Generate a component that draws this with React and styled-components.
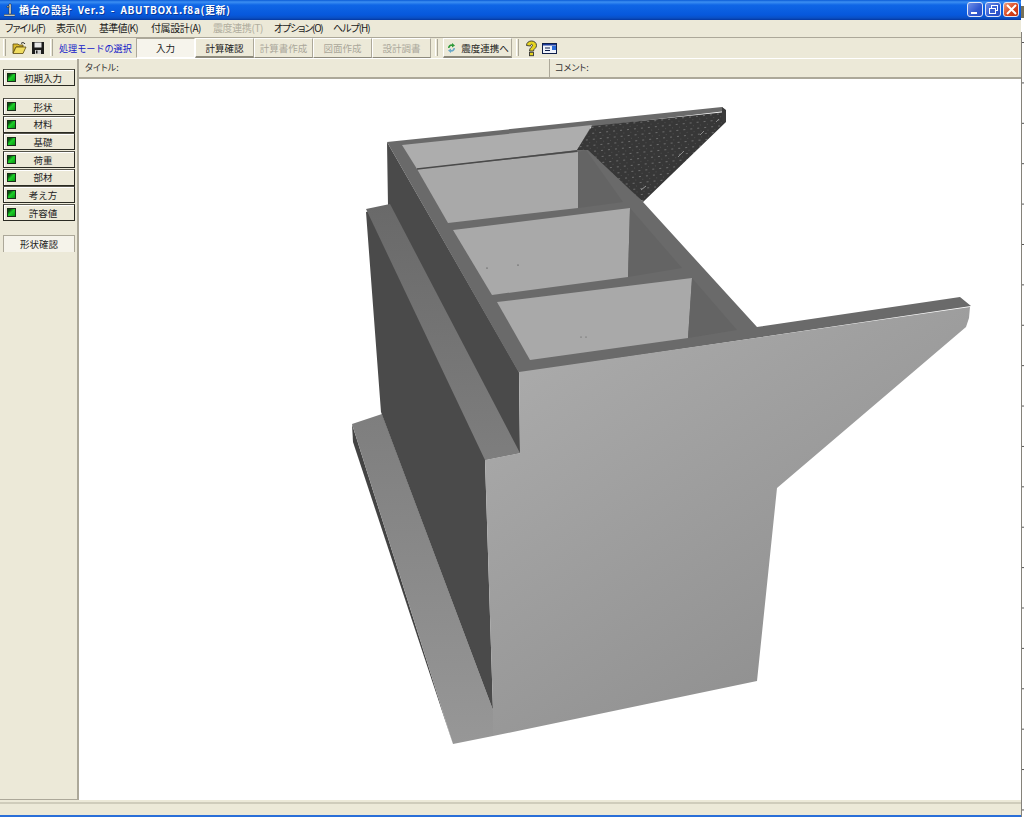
import React from "react";
import styled, { createGlobalStyle } from "styled-components";

const Global = createGlobalStyle`
  html, body { margin: 0; padding: 0; background: #fff; }
  body { width: 1024px; height: 817px; overflow: hidden; font-family: "Noto Sans CJK JP", "Liberation Sans", sans-serif; }
`;

const Screen = styled.div`
  display: flex;
  width: 1024px;
  height: 817px;
`;
const Window = styled.div`
  display: flex;
  flex-direction: column;
  width: 1021px;
  height: 817px;
  background: #ece9d8;
  flex: none;
`;
const BehindColumn = styled.div`
  flex: 1;
  display: flex;
  flex-direction: column;
`;
const BehindTitle = styled.div`
  height: 12px;
  margin-top: 6px;
  background: #77715a;
`;
const BehindPage = styled.div`
  flex: 1;
  margin-top: 14px;
  border-left: 1px solid #85827a;
  background: linear-gradient(to bottom, #fff 0 38px, #555 38px 39px, #fff 39px 40.4px) 0 12px / 100% 40.4px;
`;
const TitleBar = styled.div`
  height: 20px;
  flex: none;
  box-sizing: border-box;
  display: flex;
  align-items: center;
  padding: 0 2px 1px 4px;
  background: linear-gradient(to bottom, #0a5bd6 0, #3c8ff2 2px, #0f66e6 5px, #0758dc 15px, #0a4fc4 18px, #0537a0 20px);
`;
const TitleText = styled.span`
  flex: 1;
  margin-left: 4px;
  color: #fff;
  font: bold 10px "Noto Sans CJK JP", sans-serif;
  letter-spacing: 0.65px;
  word-spacing: 2.5px;
  white-space: nowrap;
  text-shadow: 1px 1px 0 #0a3a9c;
`;
const WinButton = styled.div`
  width: 16px;
  height: 15px;
  margin-left: 2px;
  border: 1px solid #dfe6f7;
  border-radius: 3px;
  box-sizing: border-box;
  display: flex;
  align-items: center;
  justify-content: center;
  background: ${(p) => (p.$close ? "linear-gradient(135deg,#f0a080,#d8431c 55%,#c03010)" : "linear-gradient(135deg,#6f90e8,#2f58d0 60%,#2a4cc0)")};
`;
const MenuBar = styled.div`
  height: 18px;
  flex: none;
  box-sizing: border-box;
  display: flex;
  align-items: center;
  padding: 0 0 1px 5px;
  border-bottom: 1px solid #aca899;
`;
const MenuItem = styled.span`
  width: ${(p) => p.$w}px;
  flex: none;
  font-size: 10px;
  line-height: 16px;
  white-space: nowrap;
  letter-spacing: ${(p) => p.$ls}px;
  font-feature-settings: "palt";
  color: ${(p) => (p.$off ? "#b0ad9e" : "#1a1a1a")};
`;
const Toolbar = styled.div`
  height: 21px;
  flex: none;
  box-sizing: border-box;
  display: flex;
  align-items: stretch;
  padding-left: 3px;
  border-bottom: 1px solid #fff;
`;
const Grip = styled.div`
  width: 3px;
  box-sizing: border-box;
  margin: 1px 0 2px ${(p) => p.$left || 0}px;
  border-left: 1px solid #fff;
  border-right: 1px solid #aca899;
`;
const IconSlot = styled.div`
  width: ${(p) => p.$w}px;
  margin-left: ${(p) => p.$ml || 0}px;
  display: flex;
  align-items: center;
  justify-content: center;
`;
const ModeLabel = styled.span`
  width: 77px;
  margin-left: 6px;
  color: #1420c8;
  font-size: 9.1px;
  line-height: 20px;
  white-space: nowrap;
`;
const ToolButton = styled.div`
  width: ${(p) => p.$w || 59}px;
  margin-left: ${(p) => p.$ml || 0}px;
  box-sizing: border-box;
  display: flex;
  align-items: center;
  justify-content: center;
  gap: 4px;
  font-size: 9.5px;
  white-space: nowrap;
  color: ${(p) => (p.$off ? "#aaa79a" : "#1a1a1a")};
  background: ${(p) => (p.$pressed ? "#f6f4ec" : "#ece9d8")};
  border-style: solid;
  border-width: 1px;
  border-color: ${(p) => (p.$pressed ? "#aca899 #fff #fff #aca899" : "#fff #aca899 #8d8a7c #fff")};
  border-bottom-width: ${(p) => (p.$pressed || p.$off ? 1 : 2)}px;
`;
const Main = styled.div`
  flex: 1;
  min-height: 0;
  display: flex;
`;
const Sidebar = styled.div`
  width: 79px;
  flex: none;
  box-sizing: border-box;
  display: flex;
  flex-direction: column;
  padding: 10px 2px 0 3px;
  border-bottom: 1px solid #aca899;
  border-right: 2px solid #aca899;
  box-shadow: inset 0 2px 0 -1px #fff;
`;
const NavButton = styled.div`
  height: 17px;
  flex: none;
  margin-bottom: ${(p) => p.$mb ?? 0.7}px;
  box-sizing: border-box;
  display: flex;
  align-items: center;
  padding-left: 3px;
  border: 1px solid #2a2a22;
  border-top-color: #55544a;
  background: #ece9d8;
  box-shadow: inset 1px 1px 0 #fff;
`;
const Led = styled.span`
  width: 9px;
  height: 9px;
  flex: none;
  background: linear-gradient(135deg, #0b5410 20%, #1bd027 48%, #0a9412);
  border: 1px solid #1c2c1c;
  box-sizing: border-box;
`;
const NavText = styled.span`
  flex: 1;
  text-align: center;
  padding-right: 4px;
  font-size: 9.5px;
  color: #222;
  white-space: nowrap;
`;
const ViewTab = styled.div`
  height: 17px;
  margin-top: 13px;
  box-sizing: border-box;
  display: flex;
  align-items: center;
  justify-content: center;
  font-size: 9.5px;
  color: #222;
  border: 1px solid #aca899;
  border-bottom: none;
  background: #f5f3ea;
`;
const Content = styled.div`
  flex: 1;
  min-width: 0;
  display: flex;
  flex-direction: column;
`;
const InfoRow = styled.div`
  height: 20px;
  flex: none;
  display: flex;
  box-sizing: border-box;
  border-bottom: 2px solid #aca899;
`;
const InfoCell = styled.div`
  width: ${(p) => p.$w}px;
  flex: ${(p) => (p.$w ? "none" : 1)};
  box-sizing: border-box;
  padding-left: ${(p) => p.$pl}px;
  font-size: 9px;
  line-height: 17px;
  color: #333;
  font-feature-settings: "palt";
  border-right: ${(p) => (p.$w ? "1px solid #aca899" : "none")};
`;
const Viewport = styled.div`
  flex: 1;
  min-height: 0;
  background: #fff;
`;
const Drawing = styled.svg`
  display: block;
  width: 100%;
  height: 100%;
`;
const StatusBar = styled.div`
  height: 13px;
  flex: none;
  margin-top: 2px;
  border-top: 2px solid #cfccbb;
  box-sizing: border-box;
`;
const BottomEdge = styled.div`
  height: 2px;
  flex: none;
  background: #2a6fd8;
`;

const Poly = ({ p, f }) => <polygon points={p} fill={f} />;

const Bridge = () => (
  <Drawing viewBox="79 79 942 721" preserveAspectRatio="none">
    <defs>
      <linearGradient id="front" x1="0" y1="0" x2="0.75" y2="1">
        <stop offset="0" stopColor="#aeaeae" />
        <stop offset="1" stopColor="#8c8c8c" />
      </linearGradient>
      <linearGradient id="corbel" x1="0" y1="0" x2="0" y2="1">
        <stop offset="0" stopColor="#696969" />
        <stop offset="1" stopColor="#7e7e7e" />
      </linearGradient>
      <linearGradient id="base" x1="0" y1="0" x2="0" y2="1">
        <stop offset="0" stopColor="#7e7e7e" />
        <stop offset="1" stopColor="#979797" />
      </linearGradient>
      <pattern id="mesh" width="7" height="6" patternUnits="userSpaceOnUse" patternTransform="rotate(-6)">
        <rect width="7" height="6" fill="#373737" />
        <rect x="1" y="2" width="2" height="1" fill="#6c6c6c" />
        <rect x="4" y="5" width="1" height="1" fill="#505050" />
      </pattern>
    </defs>
    <Poly p="352,424 353,442 450,735 453,744" f="#434343" />
    <Poly p="352,424 382,414 493,710 493,736 453,744" f="url(#base)" />
    <Poly p="387,142 388,206 366,212 381,412 493,710 485,460 520,453 519,372" f="#4a4a4a" />
    <Poly p="366,209 390,204 520,453 485,460" f="url(#corbel)" />
    <Poly p="387,142 722,107 726,111 590,127 592,150 643,202 757,327 960,297 971,306 519,373" f="#6a6a6a" />
    <Poly p="402,145 592,125 577,150 417,169" f="#adadad" />
    <Poly p="417,169 578,152 578,208 448,223" f="#a9a9a9" />
    <Poly p="578,152 586,150 623,202 578,208" f="#646464" />
    <Poly p="453,230 630,208 628,277 492,295" f="#a9a9a9" />
    <Poly p="630,208 682,268 628,277" f="#646464" />
    <Poly p="497,302 692,278 688,338 530,360" f="#a9a9a9" />
    <Poly p="692,278 737,330 688,338" f="#646464" />
    <Poly p="592,126 726,112 726,122 643,202 588,150 577,150" f="url(#mesh)" />
    <line x1="417" y1="169" x2="577" y2="151" stroke="#4a4a4a" strokeWidth="1.4" />
    <line x1="641" y1="190" x2="646" y2="186" stroke="#9a9a9a" strokeWidth="1" />
    <line x1="678" y1="157" x2="684" y2="151" stroke="#8a8a8a" strokeWidth="1" />
    <line x1="700" y1="135" x2="704" y2="131" stroke="#8a8a8a" strokeWidth="1" />
    <line x1="716" y1="122" x2="719" y2="119" stroke="#8a8a8a" strokeWidth="1" />
    <Poly p="519,372 970,307 969,318 966,327 777,488 757,681 493,736 493,710 485,460 520,453" f="url(#front)" />
    <Poly p="722,107 726,110 726,122 722,122" f="#3a3a3a" />
    <circle cx="487" cy="268" r=".6" fill="#333" />
    <circle cx="518" cy="265" r=".6" fill="#333" />
    <circle cx="581" cy="337" r=".6" fill="#555" />
    <circle cx="586" cy="337" r=".6" fill="#555" />
  </Drawing>
);

const Folder = () => (
  <svg width="15" height="14" viewBox="0 0 15 14">
    <path d="M1 3h5l1 1h4v2H4L1 12z" fill="#d9b92e" stroke="#5a4a10" strokeWidth=".8" />
    <path d="M1 12.500 4 6h10l-3 6.500z" fill="#f0dc60" stroke="#5a4a10" strokeWidth=".8" />
    <path d="M9 2.500c1.500-1.500 3-1 4 .5" fill="none" stroke="#222" strokeWidth="1" />
  </svg>
);
const Floppy = () => (
  <svg width="14" height="14" viewBox="0 0 14 14">
    <path d="M1 1h12v12H1z" fill="#1c1c1c" />
    <path d="M3.500 1.500h7v5h-7z" fill="#e8e8e8" />
    <path d="M4 9h6v4H4z" fill="#d0d0d0" />
    <path d="M5 9.500h1.500v3H5z" fill="#222" />
  </svg>
);
const Recycle = () => (
  <svg width="11" height="12" viewBox="0 0 11 12">
    <path d="M2 6a3.500 3.500 0 0 1 4-3.600V1l3 2.400-3 2V4A2.200 2.200 0 0 0 3.500 6z" fill="#2f9a3a" />
    <path d="M9 6a3.500 3.500 0 0 1-4 3.600V11L2 8.600l3-2V8a2.200 2.200 0 0 0 2.500-2z" fill="#6aa8c8" />
  </svg>
);
const Help = () => (
  <svg width="13" height="17" viewBox="0 0 13 17">
    <path d="M1.500 5.500c0-6 10-6 10 0 0 3-3 3-3 5.500h-4C4.500 7.500 7.500 7 7.500 5.500s-2-1.500-2 .5z" fill="#e6d420" stroke="#333" strokeWidth=".9" />
    <rect x="4.500" y="12.300" width="4" height="3.400" fill="#e6d420" stroke="#333" strokeWidth=".9" />
  </svg>
);
const Card = () => (
  <svg width="15" height="11" viewBox="0 0 15 11">
    <rect x=".5" y=".5" width="14" height="10" fill="#eef2fa" stroke="#10204a" />
    <rect x="1" y="1" width="13" height="1.500" fill="#1a3a9a" />
    <rect x="3" y="4.500" width="5" height="1" fill="#10204a" />
    <rect x="3" y="7" width="5" height="1" fill="#10204a" />
    <rect x="10" y="3" width="4" height="4" fill="#2a6ad8" />
  </svg>
);
const AppIcon = () => (
  <svg width="11" height="14" viewBox="0 0 11 14">
    <path d="M5 1h2v10H5zM3 3h2v1.500H3z" fill="#f4f0d8" stroke="#1a1a1a" strokeWidth=".5" />
    <path d="M0 11.500h11V13H0z" fill="#f4f0d8" stroke="#1a1a1a" strokeWidth=".4" />
  </svg>
);

const menus = [
  { label: "ファイル(F)", w: 51, ls: -1 },
  { label: "表示(V)", w: 43, ls: -0.4 },
  { label: "基準値(K)", w: 52, ls: -0.7 },
  { label: "付属設計(A)", w: 62, ls: -0.4 },
  { label: "震度連携(T)", w: 61, ls: -0.4, off: true },
  { label: "オプション(O)", w: 59, ls: -1.2 },
  { label: "ヘルプ(H)", w: 40, ls: -1 },
];
const navs = ["形状", "材料", "基礎", "荷重", "部材", "考え方", "許容値"];

export default function App() {
  return (
    <Screen>
      <Global />
      <Window>
        <TitleBar>
          <AppIcon />
          <TitleText>橋台の設計 Ver.3 - ABUTBOX1.f8a(更新)</TitleText>
          <WinButton>
            <svg width="10" height="10" viewBox="0 0 10 10"><rect x="1" y="7" width="6" height="2" fill="#fff" /></svg>
          </WinButton>
          <WinButton>
            <svg width="11" height="11" viewBox="0 0 11 11" fill="none" stroke="#fff"><rect x="3.500" y="1.500" width="6" height="5" /><rect x="1.500" y="4.500" width="6" height="5" fill="#3a60d0" /></svg>
          </WinButton>
          <WinButton $close>
            <svg width="11" height="11" viewBox="0 0 11 11" stroke="#fff" strokeWidth="2"><path d="M1 1l9 9M10 1l-9 9" /></svg>
          </WinButton>
        </TitleBar>
        <MenuBar>
          {menus.map((m) => (
            <MenuItem key={m.label} $w={m.w} $ls={m.ls} $off={m.off}>{m.label}</MenuItem>
          ))}
        </MenuBar>
        <Toolbar>
          <Grip />
          <IconSlot $w={15} $ml={6}><Folder /></IconSlot>
          <IconSlot $w={15} $ml={3}><Floppy /></IconSlot>
          <Grip $left={5} />
          <ModeLabel>処理モードの選択</ModeLabel>
          <ToolButton $pressed>入力</ToolButton>
          <ToolButton>計算確認</ToolButton>
          <ToolButton $off>計算書作成</ToolButton>
          <ToolButton $off>図面作成</ToolButton>
          <ToolButton $off>設計調書</ToolButton>
          <Grip $left={4} />
          <ToolButton $w={69} $ml={5}><Recycle />震度連携へ</ToolButton>
          <Grip $left={4} />
          <IconSlot $w={13} $ml={6}><Help /></IconSlot>
          <IconSlot $w={15} $ml={4}><Card /></IconSlot>
        </Toolbar>
        <Main>
          <Sidebar>
            <NavButton $mb={12}><Led /><NavText>初期入力</NavText></NavButton>
            {navs.map((n) => (
              <NavButton key={n}><Led /><NavText>{n}</NavText></NavButton>
            ))}
            <ViewTab>形状確認</ViewTab>
          </Sidebar>
          <Content>
            <InfoRow>
              <InfoCell $w={471} $pl={6}>タイトル:</InfoCell>
              <InfoCell $pl={5}>コメント:</InfoCell>
            </InfoRow>
            <Viewport><Bridge /></Viewport>
          </Content>
        </Main>
        <StatusBar />
        <BottomEdge />
      </Window>
      <BehindColumn>
        <BehindTitle />
        <BehindPage />
      </BehindColumn>
    </Screen>
  );
}
